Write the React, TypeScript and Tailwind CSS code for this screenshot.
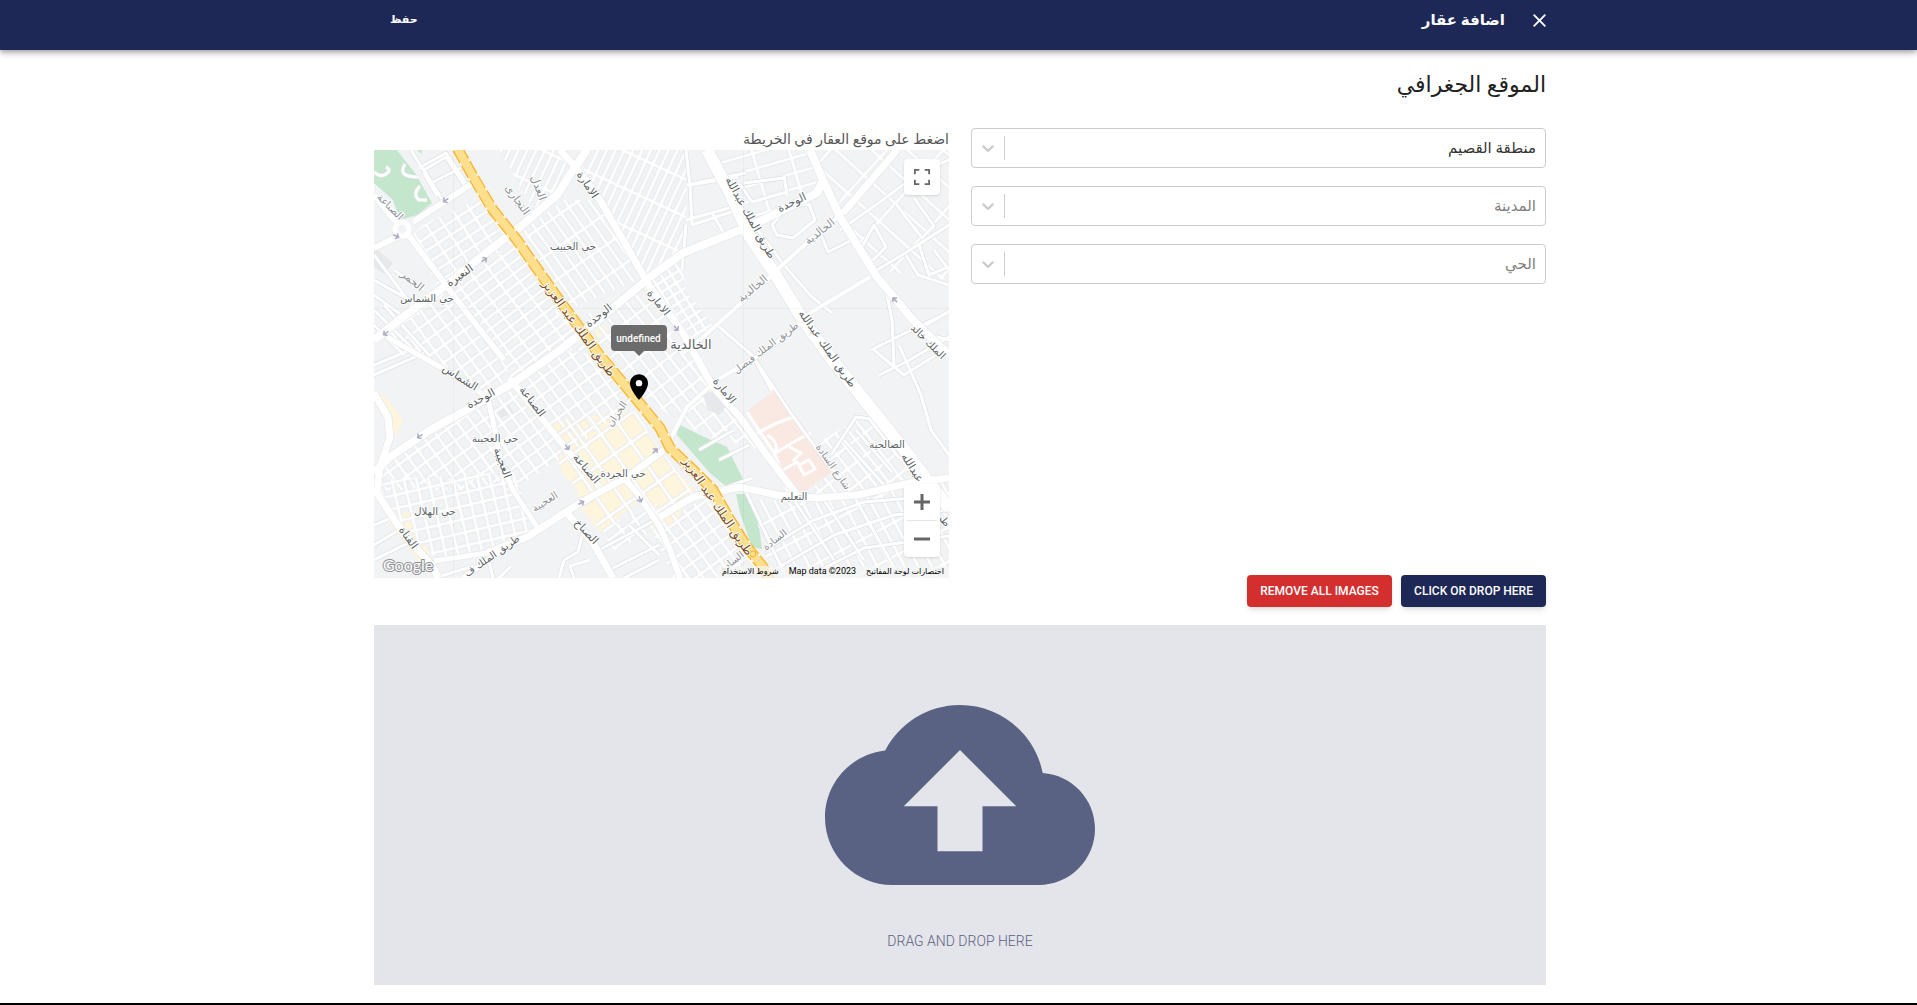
import { useState } from 'react'

const regions = ['منطقة القصيم', 'منطقة الرياض', 'منطقة حائل']

const blocks = [
  { fill: 'url(#g-small)', points: '50,75 112,45 143,90 66,140 36,87' },
  { fill: 'url(#g-left)', points: '66,140 150,90 228,200 186,200 139,233 93,163' },
  { fill: 'url(#g-mid)', points: '0,190 66,140 126,203 139,233 103,245 66,217 13,187' },
  { fill: 'url(#g-long)', points: '150,80 190,50 226,50 269,127 183,165 160,105' },
  { fill: 'url(#g-steep)', points: '213,0 312,0 312,100 275,125 226,50 200,25' },
  { fill: 'url(#g-tiny)', points: '276,130 306,108 312,140 340,178 312,190' },
  { fill: 'url(#g-right)', points: '183,165 233,163 270,132 319,205 389,300 330,285 303,270 262,240' },
  { fill: 'url(#g-mid)', points: '0,325 56,280 116,250 139,233 186,200 224,205 258,250 200,300 139,340 0,340' },
  { fill: 'url(#g-low)', points: '6,330 139,322 163,377 113,403 66,410 29,383 4,345' },
  { fill: 'url(#g-mid)', points: '276,375 340,345 370,400 390,428 300,428' },
  { fill: 'url(#g-fan)', points: '380,350 443,350 536,335 575,330 575,428 400,428 388,397' },
  { fill: 'url(#g-right)', points: '445,292 492,265 530,310 545,332 483,345 430,345 458,322' },
  { fill: 'url(#g-wide)', points: '440,0 575,0 575,130 503,120 466,67' },
  { fill: 'url(#g-top)', points: '340,0 436,0 443,40 380,70' },
  { fill: 'url(#g-steep)', points: '125,0 186,0 199,20 183,45 160,60' },
  { fill: 'url(#g-left)', points: '228,378 286,353 290,375 240,400' },
]

const thinRoads = [
  'M37 0l20 33 34-17M45 18l27-15 20 30M50 23l13 23',
  'M50 20l22-13 20 31-23 13z',
  'M312 0l4 35 48-8M316 35l2 40 48-16M338 62l12 22M312 70l50-14M312 35l60-12',
  'M312 75l-4 45',
  'M380 75l30 40 28 32 20 16M398 75l15-18 22-3 6 16-22 18-16-3z',
  'M370 33l40-5M410 25l3 20M366 34l12 18 35-10M446 82l8 20 24-12',
  'M466 80l40-28 40-30 29-12M540 48l20 28-12 12-26-34M500 75l12 22-14 14-10-14z',
  'M503 120l25-15 47-30M532 105l12 20 31 10M545 95l10 30 20-8M560 100l15 20',
  'M513 145l5 25 2 45M548 178l27-17M575 190l-20-5',
  'M343 175l35 30 40 60 40 55M378 205l20 36',
  'M497 200l28-14 50-24M505 225l27-13 43-25M525 195l22 50 10 35 18 25M500 200l30 25 45-28',
  'M457 305l25-38 15 2M470 290l40 45M482 280l36 42M495 268l30 40',
  'M0 160l40 40M0 175l30 30M10 155l45 50M0 215l36-15M0 225l50-22',
  'M0 375l20-8M0 395l25-15M0 410l40-20',
  'M185 428l5-18 14-8 4-16 10-4M200 428l-4-12 20-6M225 400l60-32M235 420l50-25M250 428l35-18M255 375l30 30',
  'M60 428l40-12M125 428l12-12M113 403l6 25',
  'M0 105l45 60M0 130l50 28M0 145l30 22M20 120l30 20',
  'M339 340l40 70M353 337l25-9M325 300l35-20M345 310l30-15M366 337l6 5 40 85M420 350l40 60M450 350l40 60M480 346l45 80',
  'M390 400l50-30 50-18 60-5M400 420l60-35 60-20 55-5M430 428l60-30 85-12',
]

const mainRoads = [
  { w: 8, d: 'M213 0L199 20 183 45 146 77 113 102 66 140 29 167 0 190' },
  { w: 7, d: 'M186 0L204 20 226 50 249 90 276 137 309 183 339 237 366 267 389 300 423 345' },
  { w: 8, d: 'M449 30L443 43 389 70 366 80 309 103 276 127 233 163 186 200 139 233 96 258 56 280 16 307 0 323' },
  { w: 12, d: 'M333 0L356 43 376 87 403 127 429 170 456 207 509 273 533 303 553 330 575 358' },
  { w: 8, d: 'M436 0L449 30 466 67 503 127 539 170 575 205' },
  { w: 7, d: 'M523 0L469 63' },
  { w: 4, d: 'M469 63L436 90 406 117 393 130 329 187 309 203' },
  { w: 4, d: 'M496 127L436 163 419 180 389 203 343 230 313 257 296 290' },
  { w: 7, d: 'M286 367L319 347 366 337 403 345 443 348 483 345 536 333 575 328' },
  { w: 7, d: 'M290 300L253 327 206 353 153 387 113 403' },
  { w: 5, d: 'M143 390L89 428M113 403L60 411' },
  { w: 6, d: 'M36 87L66 127 93 163 130 210' },
  { w: 6, d: 'M135 228L169 270 199 307 226 337M246 323L266 347 286 377 296 400 306 428' },
  { w: 7, d: 'M0 243L14 267 16 287 6 317 3 343 29 383 59 417 64 428' },
  { w: 5, d: 'M112 240L121 280 126 310 139 340 163 377' },
  { w: 7, d: 'M193 363L219 393 239 428' },
  { w: 6, d: 'M99 33L39 72M0 45L23 73M0 98L25 86M28 72l8 16' },
  { w: 5, d: 'M13 187L66 217 103 240 116 250' },
]

const highway = 'M82 -4L101 30 119 60 143 90 159 113 183 147 224 203 263 250 286 278 296 298 316 317 339 340 356 370 373 397 389 417 398 434'

type Label = { t: string; x: number; y: number; r?: number; s?: number; c?: string }

const DARK = '#5b5f64'
const SOFT = '#8b8f94'
const BROWN = '#7b4a1c'

const labels: Label[] = [
  { t: 'الامارة', x: 213, y: 35, r: 57 },
  { t: 'التجارى', x: 143, y: 50, r: 55, c: SOFT },
  { t: 'العدل', x: 164, y: 38, r: 70, c: SOFT },
  { t: 'الصناعة', x: 16, y: 57, r: 45, s: 10, c: SOFT },
  { t: 'حي الخبيب', x: 199, y: 97, s: 10 },
  { t: 'النعيرة', x: 86, y: 126, r: -35 },
  { t: 'الحمر', x: 38, y: 131, r: 40, c: SOFT },
  { t: 'حي الشماس', x: 53, y: 149, s: 10 },
  { t: 'الوحدة', x: 225, y: 166, r: -38 },
  { t: 'طريق الملك عبد العزيز', x: 204, y: 179, r: 54, s: 12, c: BROWN },
  { t: 'طريق الملك عبد العزيز', x: 343, y: 357, r: 56, s: 12, c: BROWN },
  { t: 'الامارة', x: 284, y: 153, r: 52 },
  { t: 'طريق الملك عبدالله', x: 376, y: 68, r: 61 },
  { t: 'الوحدة', x: 418, y: 53, r: -25 },
  { t: 'الخالدية', x: 446, y: 82, r: -38, c: SOFT },
  { t: 'الخالدية', x: 379, y: 139, r: -40, c: SOFT },
  { t: 'طريق الملك عبدالله', x: 453, y: 199, r: 55 },
  { t: 'طريق الملك فيصل', x: 392, y: 198, r: -37, s: 10, c: SOFT },
  { t: 'الملك خالد', x: 554, y: 192, r: 45, s: 10 },
  { t: 'الخالدية', x: 317, y: 196, s: 13 },
  { t: 'الشماس', x: 86, y: 228, r: 33 },
  { t: 'الوحدة', x: 107, y: 249, r: -28 },
  { t: 'الصناعة', x: 158, y: 252, r: 53 },
  { t: 'الخزان', x: 243, y: 264, r: -55, s: 10, c: SOFT },
  { t: 'حي العجيبة', x: 121, y: 289, s: 10 },
  { t: 'العجيبة', x: 128, y: 313, r: 70 },
  { t: 'الصناعة', x: 212, y: 319, r: 50 },
  { t: 'حي الجردة', x: 249, y: 324, s: 10 },
  { t: 'العجيبة', x: 171, y: 352, r: -33, s: 10, c: SOFT },
  { t: 'حي الهلال', x: 61, y: 362, s: 10 },
  { t: 'القناة', x: 34, y: 388, r: 55 },
  { t: 'الصباخ', x: 212, y: 382, r: 47 },
  { t: 'طريق الملك ف', x: 118, y: 406, r: -35, s: 10 },
  { t: 'الامارة', x: 350, y: 241, r: 52 },
  { t: 'الصالحية', x: 513, y: 295, s: 10 },
  { t: 'عبدالله', x: 538, y: 318, r: 58 },
  { t: 'شارع السادة', x: 459, y: 317, r: 55, s: 10, c: SOFT },
  { t: 'التعليم', x: 420, y: 347, s: 10 },
  { t: 'السادة', x: 401, y: 390, r: -38, s: 10, c: SOFT },
  { t: 'طريق', x: 566, y: 366, r: 50, s: 10 },
  { t: 'السادة', x: 358, y: 412, r: -38, s: 10, c: SOFT },
]

const patterns = [
  { id: 'g-small', w: 15, h: 11, r: -33 },
  { id: 'g-left', w: 17, h: 10, r: -37 },
  { id: 'g-mid', w: 12, h: 14, r: -36 },
  { id: 'g-long', w: 26, h: 10, r: 55 },
  { id: 'g-steep', w: 34, h: 8, r: -65 },
  { id: 'g-tiny', w: 9, h: 9, r: 58 },
  { id: 'g-right', w: 18, h: 12, r: 52 },
  { id: 'g-low', w: 12, h: 13, r: -13 },
  { id: 'g-fan', w: 30, h: 12, r: 62 },
  { id: 'g-wide', w: 42, h: 24, r: 42 },
  { id: 'g-top', w: 36, h: 15, r: -16 },
  { id: 'g-shop', w: 20, h: 24, r: -35 },
]

const arrows = [
  { x: 72, y: 50, r: 145 },
  { x: 22, y: 86, r: 25 },
  { x: 110, y: 110, r: -35 },
  { x: 12, y: 183, r: 145 },
  { x: 46, y: 286, r: 145 },
  { x: 193, y: 297, r: 55 },
  { x: 207, y: 353, r: -30 },
  { x: 266, y: 349, r: 70 },
  { x: 281, y: 301, r: -45 },
  { x: 521, y: 150, r: 225 },
  { x: 302, y: 178, r: 50 },
]

const MapCanvas = () => (
  <svg
    viewBox="0 0 575 428"
    preserveAspectRatio="xMidYMid slice"
    className="block h-full w-full"
    role="img"
    aria-label="خريطة"
  >
    <defs>
      {patterns.map((p) => (
        <pattern
          key={p.id}
          id={p.id}
          width={p.w}
          height={p.h}
          patternUnits="userSpaceOnUse"
          patternTransform={`rotate(${p.r})`}
        >
          <path d={`M0 3H${p.w}M3 0V${p.h}`} stroke="#dfe2e6" strokeWidth="4.4" />
          <path d={`M0 3H${p.w}M3 0V${p.h}`} stroke="#fff" strokeWidth="3" />
        </pattern>
      ))}
    </defs>

    <rect width="575" height="428" fill="#f1f3f4" />

    {/* parks */}
    <g fill="#c3e6cd">
      <path d="M0 0H23L29 8 41 23 49 37 58 53 43 65 26 70 19 50 0 33z" />
      <path d="M43 0h5v4z" />
      <path d="M304 274L326 285 353 297 371 333 353 337 336 323 303 285z" />
      <path d="M362 344H375L384 370 388 399 378 397 366 363z" />
    </g>
    <g fill="none" stroke="#e1e4e8" strokeWidth="4">
      <path d="M0 22q6 6 12 2t0-7M31 14q-6 10 4 12t8 0M46 36q-8 8-1 14l8 0" />
      <path d="M0 22q6 6 12 2t0-7M31 14q-6 10 4 12t8 0M46 36q-8 8-1 14l8 0" stroke="#fff" strokeWidth="3" />
    </g>

    {/* hospital, shops, parking */}
    <path d="M371 263L401 240 433 280 458 322 428 343 409 320 386 283z" fill="#fae8e3" />
    <g fill="#fef5dd">
      <path d="M173 272L239 263 263 262 286 305 286 353 266 350 226 382 209 360 203 340 189 323 183 310 195 298z" />
      <path d="M276 285L296 313 320 340 300 375 276 380z" />
      <path d="M6 240L29 270 21 287 14 265zM36 362L42 385 56 403 46 412 11 368z" />
      <path d="M220 180l10-6 4 8-10 6z" />
    </g>
    <g fill="#e6e8ec">
      <path d="M0 97L19 113 10 124 0 117z" />
      <path d="M122 258l12-5 6 10-14 5z" />
    </g>

    {blocks.map((b, i) => (
      <polygon key={i} points={b.points} fill={b.fill} />
    ))}
    <path d="M173 272L239 263 263 262 286 305 286 353 226 382 203 340 183 310z" fill="url(#g-shop)" />
    <path d="M276 285L296 313 320 345 276 380z" fill="url(#g-shop)" />
    <path d="M329 245L345 238 356 252 345 265 334 260z" fill="#e6e8ec" />
    <path
      d="M373 262l28 42 14 40M383 283l20-10 16-6M401 303l24-14 12-6M409 320l14-8 8 14M415 297l12 6-8 8M393 285q14 8 7 22M425 315l10-5 6 9-9 5"
      fill="none"
      stroke="#fff"
      strokeWidth="3"
    />

    <g fill="none" strokeLinejoin="round">
      {thinRoads.map((d) => (
        <path key={d} d={d} stroke="#dfe2e6" strokeWidth="4.4" />
      ))}
      {thinRoads.map((d) => (
        <path key={d} d={d} stroke="#fff" strokeWidth="3" />
      ))}
      {mainRoads.map((road) => (
        <path key={road.d} d={road.d} stroke="#e6e8eb" strokeWidth={road.w + 1.5} />
      ))}
      {mainRoads.map((road) => (
        <path key={road.d} d={road.d} stroke="#fff" strokeWidth={road.w} />
      ))}
      <circle cx="28" cy="79" r="7" fill="#f1f3f4" stroke="#fff" strokeWidth="5" />
      <path d={highway} stroke="#f9b42d" strokeWidth="11" />
      <path d={highway} stroke="#fff" strokeWidth="11" strokeDasharray="3 14" />
      <path d={highway} stroke="#fddf8d" strokeWidth="8.4" />
    </g>
    <circle cx="379" cy="404" r="3" fill="#fddf8d" stroke="#f9b42d" />
    <path d="M0 158.500H575M79.500 0V428M369.500 0V428" stroke="#000" strokeOpacity=".03" />

    {/* one-way arrows */}
    <g fill="none" stroke="#a9acc4" strokeWidth="1.500">
      {arrows.map((a) => (
        <path
          key={`${a.x}-${a.y}`}
          d="M-3 0H3M0-3L3 0 0 3"
          transform={`translate(${a.x} ${a.y}) rotate(${a.r})`}
        />
      ))}
    </g>

    <g
      textAnchor="middle"
      direction="rtl"
      className="font-['DejaVu_Sans',sans-serif]"
      stroke="#fff"
      strokeWidth="2"
      strokeLinejoin="round"
      paintOrder="stroke"
    >
      {labels.map((l, i) => (
        <text
          key={i}
          fontSize={l.s ?? 11}
          fill={l.c ?? DARK}
          transform={`translate(${l.x} ${l.y}) rotate(${l.r ?? 0})`}
          dy="3"
        >
          {l.t}
        </text>
      ))}
    </g>
    <text
      x="9"
      y="421"
      fontSize="16"
      direction="ltr"
      fill="#fff"
      stroke="#8d8f92"
      strokeWidth="2"
      paintOrder="stroke"
      className="font-['Lato',sans-serif]"
    >
      Google
    </text>
  </svg>
)

type SelectBoxProps = { label: string; options: string[]; placeholder?: boolean }

const SelectBox = ({ label, options, placeholder }: SelectBoxProps) => {
  const [value, setValue] = useState(placeholder ? '' : options[0])

  return (
    <div className="flex h-10 items-center rounded border border-[#cccccc] bg-white">
      <select
        aria-label={label}
        value={value}
        onChange={(e) => setValue(e.target.value)}
        className={`h-full min-w-0 flex-1 appearance-none bg-transparent pr-[9px] text-[15px] outline-none ${
          value ? 'text-[#333333]' : 'text-[#808080]'
        }`}
      >
        {placeholder && <option value="">{label}</option>}
        {options.map((o) => (
          <option key={o} value={o}>
            {o}
          </option>
        ))}
      </select>
      <span className="h-6 w-px bg-[#cccccc]" />
      <svg viewBox="0 0 20 20" className="mx-[6px] size-5 fill-[#cccccc]" aria-hidden="true">
        <path d="M4.516 7.548c0.436-0.446 1.043-0.481 1.576 0l3.908 3.747 3.908-3.747c0.533-0.481 1.141-0.446 1.574 0 0.436 0.445 0.408 1.197 0 1.615-0.406 0.418-4.695 4.502-4.695 4.502-0.217 0.223-0.502 0.335-0.787 0.335s-0.570-0.112-0.789-0.335c0 0-4.287-4.084-4.695-4.502s-0.436-1.170 0-1.615z" />
      </svg>
    </div>
  )
}

const Header = () => (
  <header className="relative z-10 h-[50px] bg-[#1e2856] text-white shadow-[0_2px_4px_-1px_rgba(0,0,0,0.2),0_4px_5px_rgba(0,0,0,0.14),0_1px_10px_rgba(0,0,0,0.12)]">
    <div className="mx-auto flex h-[41px] max-w-[1175px] items-center pl-[19px]">
      <button type="button" aria-label="إغلاق">
        <svg viewBox="5 5 14 14" className="size-[13px] fill-current" aria-hidden="true">
          <path d="M19 6.410L17.590 5 12 10.590 6.410 5 5 6.410 10.590 12 5 17.590 6.410 19 12 13.410 17.590 19 19 17.590 13.410 12z" />
        </svg>
      </button>
      <h1 className="mr-7 text-[15px] font-bold">اضافة عقار</h1>
      <button type="button" className="mr-auto text-[11px] font-bold">
        حفظ
      </button>
    </div>
  </header>
)

const MapPicker = () => (
  <div>
    <p className="h-[22px] text-sm leading-[22px] text-[#555555]">اضغط على موقع العقار في الخريطة</p>
    <div className="relative h-[428px] overflow-hidden">
      <MapCanvas />

      {/* MARKER */}
      <div className="absolute top-[175px] left-1/2 -ml-[51px] flex w-14 flex-col items-center">
        <span className="flex h-[26px] w-full items-center justify-center rounded bg-[#6b6b6b] text-[10px] font-medium text-white">
          undefined
        </span>
        <svg viewBox="0 0 10 5" className="h-[5px] w-[10px] fill-[#6b6b6b]" aria-hidden="true">
          <path d="M0 0h10L5 5z" />
        </svg>
        <svg viewBox="5 2 14 20" className="mt-[18px] h-[26px] w-[18px]" aria-hidden="true">
          <path d="M12 2C8.130 2 5 5.130 5 9c0 5.250 7 13 7 13s7-7.750 7-13c0-3.870-3.130-7-7-7z" />
          <circle cx="12" cy="9" r="2.500" fill="#fff" />
        </svg>
      </div>

      {/* CONTROLS */}
      <button
        type="button"
        aria-label="ملء الشاشة"
        className="absolute top-[9px] right-[9px] flex size-9 items-center justify-center rounded-sm bg-white shadow"
      >
        <svg viewBox="0 0 18 18" className="size-4 fill-[#666666]" aria-hidden="true">
          <path d="M0 0v6h2V2h4V0H0zm16 0h-4v2h4v4h2V0h-2zm0 16h-4v2h6v-6h-2v4zM2 12H0v6h6v-2H2v-4z" />
        </svg>
      </button>
      <div className="absolute right-[9px] bottom-[21px] flex w-9 flex-col items-center rounded-sm bg-white shadow">
        <button type="button" aria-label="تكبير" className="flex size-9 items-center justify-center">
          <svg viewBox="0 0 16 16" className="size-4 fill-[#666666]" aria-hidden="true">
            <path d="M6.500 0h3v6.500H16v3H9.500V16h-3V9.500H0v-3h6.500z" />
          </svg>
        </button>
        <span className="h-px w-[30px] bg-[#e6e6e6]" />
        <button type="button" aria-label="تصغير" className="flex size-9 items-center justify-center">
          <svg viewBox="0 0 16 16" className="size-4 fill-[#666666]" aria-hidden="true">
            <path d="M0 6.500h16v3H0z" />
          </svg>
        </button>
      </div>
      <div className="absolute right-0 bottom-0 flex h-3 items-center gap-[10px] bg-[#f5f5f5]/70 px-[5px] text-[8px] text-black">
        <button type="button">اختصارات لوحة المفاتيح</button>
        <span dir="ltr" className="text-[9px]">Map data ©2023</span>
        <a href="#terms">شروط الاستخدام</a>
      </div>
    </div>
  </div>
)

const DropZone = () => (
  <div className="mt-[18px] flex h-[360px] flex-col items-center bg-[#e4e5ea] pt-20 text-[#5a6283]">
    <svg viewBox="0 4 24 16" className="h-[180px] w-[270px] fill-current" aria-hidden="true">
      <path d="M19.350 10.040C18.670 6.590 15.640 4 12 4 9.110 4 6.600 5.640 5.350 8.040 2.340 8.360 0 10.910 0 14c0 3.310 2.690 6 6 6h13c2.760 0 5-2.240 5-5 0-2.640-2.050-4.780-4.650-4.960zM14 13v4h-4v-4H7l5-5 5 5h-3z" />
    </svg>
    <p className="mt-[46px] text-sm leading-5 font-light">DRAG AND DROP HERE</p>
  </div>
)

const App = () => {
  return (
    <div dir="rtl" className="border-b-2 border-black bg-white font-['Roboto','DejaVu_Sans',sans-serif]">
      <Header />
      <main className="mx-auto max-w-[1175px] pb-[18px] pl-[3px]">
        <h2 className="pt-[19px] text-[22px] leading-8 text-[#212121]">الموقع الجغرافي</h2>

        <div className="mt-[27px] grid grid-cols-1 gap-[22px] md:grid-cols-2">
          <div className="flex flex-col gap-[18px]">
            <SelectBox label="المنطقة" options={regions} />
            <SelectBox label="المدينة" options={['بريدة', 'عنيزة']} placeholder />
            <SelectBox label="الحي" options={['الخالدية', 'الصالحية']} placeholder />
          </div>
          <MapPicker />
        </div>

        <div className="-mt-[3px] flex gap-[9px] text-xs font-medium text-white">
          <button type="button" className="h-8 w-[145px] rounded bg-[#1e2856] shadow-md">
            CLICK OR DROP HERE
          </button>
          <button type="button" className="h-8 w-[145px] rounded bg-[#d32f2f] shadow-md">
            REMOVE ALL IMAGES
          </button>
        </div>

        <DropZone />
      </main>
    </div>
  )
}

export default App
